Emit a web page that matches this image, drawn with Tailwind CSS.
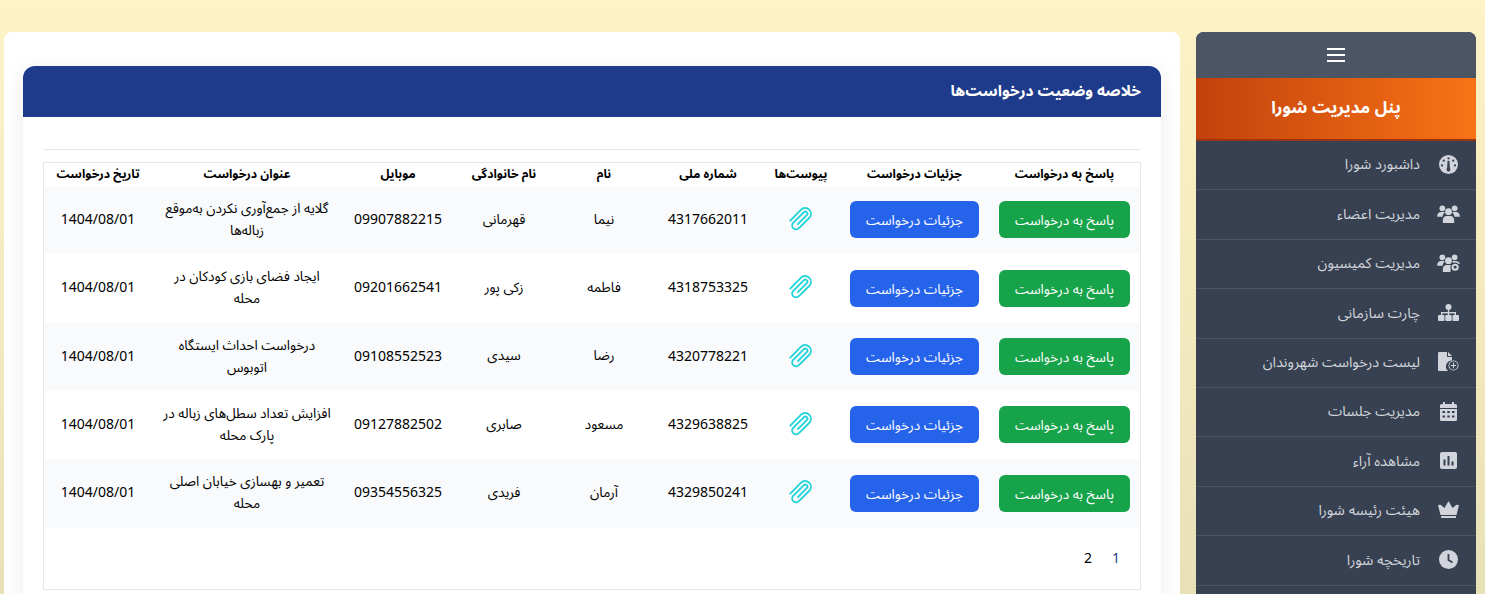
<!DOCTYPE html>
<html lang="fa" dir="rtl">
<head>
<meta charset="utf-8">
<title>پنل مدیریت شورا</title>
<script src="https://cdn.jsdelivr.net/npm/@tailwindcss/browser@4"></script>
</head>
<body class="m-0 overflow-hidden font-['Noto_Sans','Noto_Sans_Arabic','DejaVu_Sans',sans-serif]">
<div class="h-[594px] overflow-hidden bg-gradient-to-b from-[#fef3c7] to-[#e9e1b6] pt-8 pr-[9px] pl-1">
  <div class="flex gap-4 items-start">
    <aside class="w-[280px] shrink-0 rounded-t-lg overflow-hidden bg-[#374151] text-[#d1d5db] text-[14.4px]">
      <div class="h-[46px] bg-[#4b5563] flex items-center justify-center">
        <svg class="w-[18px] h-[18px]" viewBox="0 0 18 18" fill="none" stroke="white" stroke-width="2"><path d="M0 3h18M0 9h18M0 15h18"/></svg>
      </div>
      <div class="h-[63px] pb-[3px] bg-gradient-to-l from-[#f97316] to-[#c2410c] border-b-2 border-[#9a3412] flex items-center justify-center text-white font-bold text-[17px]">پنل مدیریت شورا</div>
      <div class="h-[49.4px] pb-0.5 border-b border-[#4b5563] flex items-center pr-4 gap-4"><span class="w-6 flex justify-center"><svg class="w-[19px] h-[19px]" viewBox="0 0 20 20"><circle cx="10" cy="10" r="10" fill="#d1d5db"/><g fill="#374151"><circle cx="10" cy="3.500" r="1.200"/><circle cx="5" cy="6" r="1.200"/><circle cx="15" cy="6" r="1.200"/><circle cx="3.200" cy="11" r="1.200"/><circle cx="16.800" cy="11" r="1.200"/><path d="M9 6h2l.5 8a2 2 0 1 1-3 0z"/></g></svg></span><span>داشبورد شورا</span></div>
      <div class="h-[49.4px] pb-0.5 border-b border-[#4b5563] flex items-center pr-4 gap-4"><span class="w-6 flex justify-center"><svg class="w-[23px] h-[18px]" viewBox="0 0 24 19" fill="#d1d5db"><circle cx="5.500" cy="3.500" r="3"/><circle cx="18.500" cy="3.500" r="3"/><circle cx="12" cy="7" r="3.600"/><path d="M0 12c0-3 2-4.500 4-4.500h3c.5 0 1 .2 1.300.5-1.500 1-2.500 2.500-2.500 4.500H0zM24 12c0-3-2-4.500-4-4.500h-3c-.5 0-1 .2-1.300.5 1.500 1 2.500 2.500 2.500 4.500H24zM6 19v-3c0-3 2-4.500 4-4.500h4c2 0 4 1.500 4 4.500v3z"/></svg></span><span>مدیریت اعضاء</span></div>
      <div class="h-[49.4px] pb-0.5 border-b border-[#4b5563] flex items-center pr-4 gap-4"><span class="w-6 flex justify-center"><svg class="w-[23px] h-[18px]" viewBox="0 0 24 19" fill="#d1d5db"><circle cx="5.500" cy="3.500" r="3"/><circle cx="18.500" cy="3.500" r="3"/><circle cx="12" cy="7" r="3.600"/><path d="M0 12c0-3 2-4.500 4-4.500h3c.5 0 1 .2 1.300.5-1.500 1-2.500 2.500-2.500 4.500H0zM6 19v-3c0-3 2-4.500 4-4.500h5l-1 7.500z"/><path d="M24 10.500c-.6-2-2-3-4-3h-3c-.5 0-1 .2-1.300.5 .8.600 1.500 1.300 1.900 2.200z"/><circle cx="19" cy="14" r="5" fill="#374151"/><circle cx="19" cy="14" r="3.800" fill="#d1d5db"/><circle cx="19" cy="14" r="1.500" fill="#374151"/></svg></span><span>مدیریت کمیسیون</span></div>
      <div class="h-[49.4px] pb-0.5 border-b border-[#4b5563] flex items-center pr-4 gap-4"><span class="w-6 flex justify-center"><svg class="w-[21px] h-[17px]" viewBox="0 0 21 17" fill="#d1d5db"><circle cx="10.500" cy="3" r="3"/><rect x="9.800" y="5" width="1.400" height="4"/><rect x="3" y="8" width="15" height="1.400"/><rect x="3" y="8" width="1.400" height="3"/><rect x="16.600" y="8" width="1.400" height="3"/><rect x="9.800" y="8" width="1.400" height="3"/><rect x="0" y="11" width="6.500" height="6" rx="1"/><rect x="7.300" y="11" width="6.400" height="6" rx="1"/><rect x="14.500" y="11" width="6.500" height="6" rx="1"/></svg></span><span>چارت سازمانی</span></div>
      <div class="h-[49.4px] pb-0.5 border-b border-[#4b5563] flex items-center pr-4 gap-4"><span class="w-6 flex justify-center"><svg class="w-[21px] h-[19px]" viewBox="0 0 21 19" fill="#d1d5db"><path d="M0 1a1 1 0 0 1 1-1h8v5h5v3.500A6 6 0 0 0 10 19H1a1 1 0 0 1-1-1z"/><path d="M10 0l4 4h-4z"/><circle cx="15.500" cy="13.500" r="5"/><circle cx="15.500" cy="13.500" r="4.200" fill="#374151"/><path d="M15 10.800h1v2.200h2.200v1H16v2.200h-1V14h-2.200v-1H15z"/></svg></span><span>لیست درخواست شهروندان</span></div>
      <div class="h-[49.4px] pb-0.5 border-b border-[#4b5563] flex items-center pr-4 gap-4"><span class="w-6 flex justify-center"><svg class="w-[17px] h-[19px]" viewBox="0 0 17 19" fill="#d1d5db"><path d="M3 0h2v2h7V0h2v2h1.500A1.500 1.500 0 0 1 17 3.500V6H0V3.500A1.500 1.500 0 0 1 1.500 2H3z"/><path d="M0 7h17v10.500a1.500 1.500 0 0 1-1.500 1.500h-14A1.500 1.500 0 0 1 0 17.500z"/><g fill="#374151"><rect x="2.500" y="9" width="2.500" height="2"/><rect x="7.300" y="9" width="2.500" height="2"/><rect x="12" y="9" width="2.500" height="2"/><rect x="2.500" y="13.500" width="2.500" height="2"/><rect x="7.300" y="13.500" width="2.500" height="2"/><rect x="12" y="13.500" width="2.500" height="2"/></g></svg></span><span>مدیریت جلسات</span></div>
      <div class="h-[49.4px] pb-0.5 border-b border-[#4b5563] flex items-center pr-4 gap-4"><span class="w-6 flex justify-center"><svg class="w-[17px] h-[17px]" viewBox="0 0 17 17"><rect width="17" height="17" rx="2" fill="#d1d5db"/><g fill="#374151"><rect x="3.500" y="7.500" width="2" height="6"/><rect x="7.500" y="4" width="2" height="9.500"/><rect x="11.500" y="9.500" width="2" height="4"/></g></svg></span><span>مشاهده آراء</span></div>
      <div class="h-[49.4px] pb-0.5 border-b border-[#4b5563] flex items-center pr-4 gap-4"><span class="w-6 flex justify-center"><svg class="w-[21px] h-[17px]" viewBox="0 0 21 17" fill="#d1d5db"><path d="M10.500 0l4 7 4-3.200L21 4l-2.500 10h-16L0 4l2.500-.2L6.500 7z"/><rect x="3" y="15" width="15" height="2" rx=".5"/></svg></span><span>هیئت رئیسه شورا</span></div>
      <div class="h-[49.4px] pb-0.5 border-b border-[#4b5563] flex items-center pr-4 gap-4"><span class="w-6 flex justify-center"><svg class="w-[19px] h-[19px]" viewBox="0 0 19 19"><circle cx="9.500" cy="9.500" r="9.500" fill="#d1d5db"/><path d="M9.500 4v6l4 2.500" fill="none" stroke="#374151" stroke-width="1.800"/></svg></span><span>تاریخچه شورا</span></div>
      <div class="h-[49.4px]"></div>
    </aside>
    <main class="w-[1176px] h-[640px] bg-white rounded-t-lg pt-[34px] px-[19px]">
      <section class="h-[600px] bg-white shadow-[0_4px_20px_rgba(0,0,0,0.08)] rounded-t-xl">
        <h2 class="h-[51px] pb-0.5 bg-[#1e3a8a] rounded-t-xl flex items-center pr-5 text-white font-bold text-[15.500px]">خلاصه وضعیت درخواست‌ها</h2>
        <div class="pt-8 px-5 text-black">
          <hr class="border-t border-[#e5e7eb] mb-3">
          <div class="border border-[#e5e7eb] h-[428px]">
            <table class="w-[1096px] table-fixed border-collapse text-[13.600px] text-center">
              <thead>
                <tr class="h-[22.600px] font-bold text-[12.200px]">
                  <th class="w-[151px]">پاسخ به درخواست</th><th class="w-[149px]">جزئیات درخواست</th><th class="w-[78px]">پیوست‌ها</th><th class="w-[108px]">شماره ملی</th><th class="w-[100px]">نام</th><th class="w-[100px]">نام خانوادگی</th><th class="w-[112px]">موبایل</th><th class="w-[190px]">عنوان درخواست</th><th class="w-[108px]">تاریخ درخواست</th>
                </tr>
              </thead>
              <tbody>
                <tr class="h-[68.4px] bg-[#f9fafb]">
                  <td><span class="block mx-auto h-[37px] leading-[37px] w-[131px] rounded-md bg-[#16a34a] text-white">پاسخ به درخواست</span></td><td><span class="block mx-auto h-[37px] leading-[37px] w-[129px] rounded-md bg-[#2563eb] text-white">جزئیات درخواست</span></td>
                  <td><svg class="mx-auto w-7 h-7 -mt-1" viewBox="0 0 24 24" fill="none" stroke="#22d3d8" stroke-width="1.600" stroke-linecap="round" stroke-linejoin="round"><path d="M2.800 14.300l9.300-9.500a5 5 0 0 1 7.300 6.800l-9.200 9.100a3.300 3.300 0 0 1-4.900-4.500l9-9.100a1.800 1.800 0 0 1 2.700 2.400l-7.700 7.700"/></svg></td>
                  <td class="pb-0.5 text-sm">4317662011</td><td class="pb-0.5">نیما</td><td class="pb-0.5">قهرمانی</td><td class="pb-0.5 text-sm">09907882215</td><td class="px-2 pb-0.5 leading-[22px]">گلایه از جمع‌آوری نکردن به‌موقع زباله‌ها</td><td class="pb-0.5 text-sm">1404/08/01</td>
                </tr>
                <tr class="h-[68.4px]">
                  <td><span class="block mx-auto h-[37px] leading-[37px] w-[131px] rounded-md bg-[#16a34a] text-white">پاسخ به درخواست</span></td><td><span class="block mx-auto h-[37px] leading-[37px] w-[129px] rounded-md bg-[#2563eb] text-white">جزئیات درخواست</span></td>
                  <td><svg class="mx-auto w-7 h-7 -mt-1" viewBox="0 0 24 24" fill="none" stroke="#22d3d8" stroke-width="1.600" stroke-linecap="round" stroke-linejoin="round"><path d="M2.800 14.300l9.300-9.500a5 5 0 0 1 7.300 6.800l-9.200 9.100a3.300 3.300 0 0 1-4.900-4.500l9-9.100a1.800 1.800 0 0 1 2.700 2.400l-7.700 7.700"/></svg></td>
                  <td class="pb-0.5 text-sm">4318753325</td><td class="pb-0.5">فاطمه</td><td class="pb-0.5">زکی پور</td><td class="pb-0.5 text-sm">09201662541</td><td class="px-2 pb-0.5 leading-[22px]">ایجاد فضای بازی کودکان در محله</td><td class="pb-0.5 text-sm">1404/08/01</td>
                </tr>
                <tr class="h-[68.4px] bg-[#f9fafb]">
                  <td><span class="block mx-auto h-[37px] leading-[37px] w-[131px] rounded-md bg-[#16a34a] text-white">پاسخ به درخواست</span></td><td><span class="block mx-auto h-[37px] leading-[37px] w-[129px] rounded-md bg-[#2563eb] text-white">جزئیات درخواست</span></td>
                  <td><svg class="mx-auto w-7 h-7 -mt-1" viewBox="0 0 24 24" fill="none" stroke="#22d3d8" stroke-width="1.600" stroke-linecap="round" stroke-linejoin="round"><path d="M2.800 14.300l9.300-9.500a5 5 0 0 1 7.300 6.800l-9.200 9.100a3.300 3.300 0 0 1-4.900-4.500l9-9.100a1.800 1.800 0 0 1 2.700 2.400l-7.700 7.700"/></svg></td>
                  <td class="pb-0.5 text-sm">4320778221</td><td class="pb-0.5">رضا</td><td class="pb-0.5">سیدی</td><td class="pb-0.5 text-sm">09108552523</td><td class="px-2 pb-0.5 leading-[22px]">درخواست احداث ایستگاه اتوبوس</td><td class="pb-0.5 text-sm">1404/08/01</td>
                </tr>
                <tr class="h-[68.4px]">
                  <td><span class="block mx-auto h-[37px] leading-[37px] w-[131px] rounded-md bg-[#16a34a] text-white">پاسخ به درخواست</span></td><td><span class="block mx-auto h-[37px] leading-[37px] w-[129px] rounded-md bg-[#2563eb] text-white">جزئیات درخواست</span></td>
                  <td><svg class="mx-auto w-7 h-7 -mt-1" viewBox="0 0 24 24" fill="none" stroke="#22d3d8" stroke-width="1.600" stroke-linecap="round" stroke-linejoin="round"><path d="M2.800 14.300l9.300-9.500a5 5 0 0 1 7.300 6.800l-9.200 9.100a3.300 3.300 0 0 1-4.900-4.500l9-9.100a1.800 1.800 0 0 1 2.700 2.400l-7.700 7.700"/></svg></td>
                  <td class="pb-0.5 text-sm">4329638825</td><td class="pb-0.5">مسعود</td><td class="pb-0.5">صابری</td><td class="pb-0.5 text-sm">09127882502</td><td class="px-2 pb-0.5 leading-[22px]">افزایش تعداد سطل‌های زباله در پارک محله</td><td class="pb-0.5 text-sm">1404/08/01</td>
                </tr>
                <tr class="h-[68.4px] bg-[#f9fafb]">
                  <td><span class="block mx-auto h-[37px] leading-[37px] w-[131px] rounded-md bg-[#16a34a] text-white">پاسخ به درخواست</span></td><td><span class="block mx-auto h-[37px] leading-[37px] w-[129px] rounded-md bg-[#2563eb] text-white">جزئیات درخواست</span></td>
                  <td><svg class="mx-auto w-7 h-7 -mt-1" viewBox="0 0 24 24" fill="none" stroke="#22d3d8" stroke-width="1.600" stroke-linecap="round" stroke-linejoin="round"><path d="M2.800 14.300l9.300-9.500a5 5 0 0 1 7.300 6.800l-9.200 9.100a3.300 3.300 0 0 1-4.900-4.500l9-9.100a1.800 1.800 0 0 1 2.700 2.400l-7.700 7.700"/></svg></td>
                  <td class="pb-0.5 text-sm">4329850241</td><td class="pb-0.5">آرمان</td><td class="pb-0.5">فریدی</td><td class="pb-0.5 text-sm">09354556325</td><td class="px-2 pb-0.5 leading-[22px]">تعمیر و بهسازی خیابان اصلی محله</td><td class="pb-0.5 text-sm">1404/08/01</td>
                </tr>
              </tbody>
            </table>
            <div class="flex gap-5 pr-5 pt-5 text-sm"><span class="text-[#1e3a8a]">1</span><span>2</span></div>
          </div>
        </div>
      </section>
    </main>
  </div>
</div>
</body>
</html>
